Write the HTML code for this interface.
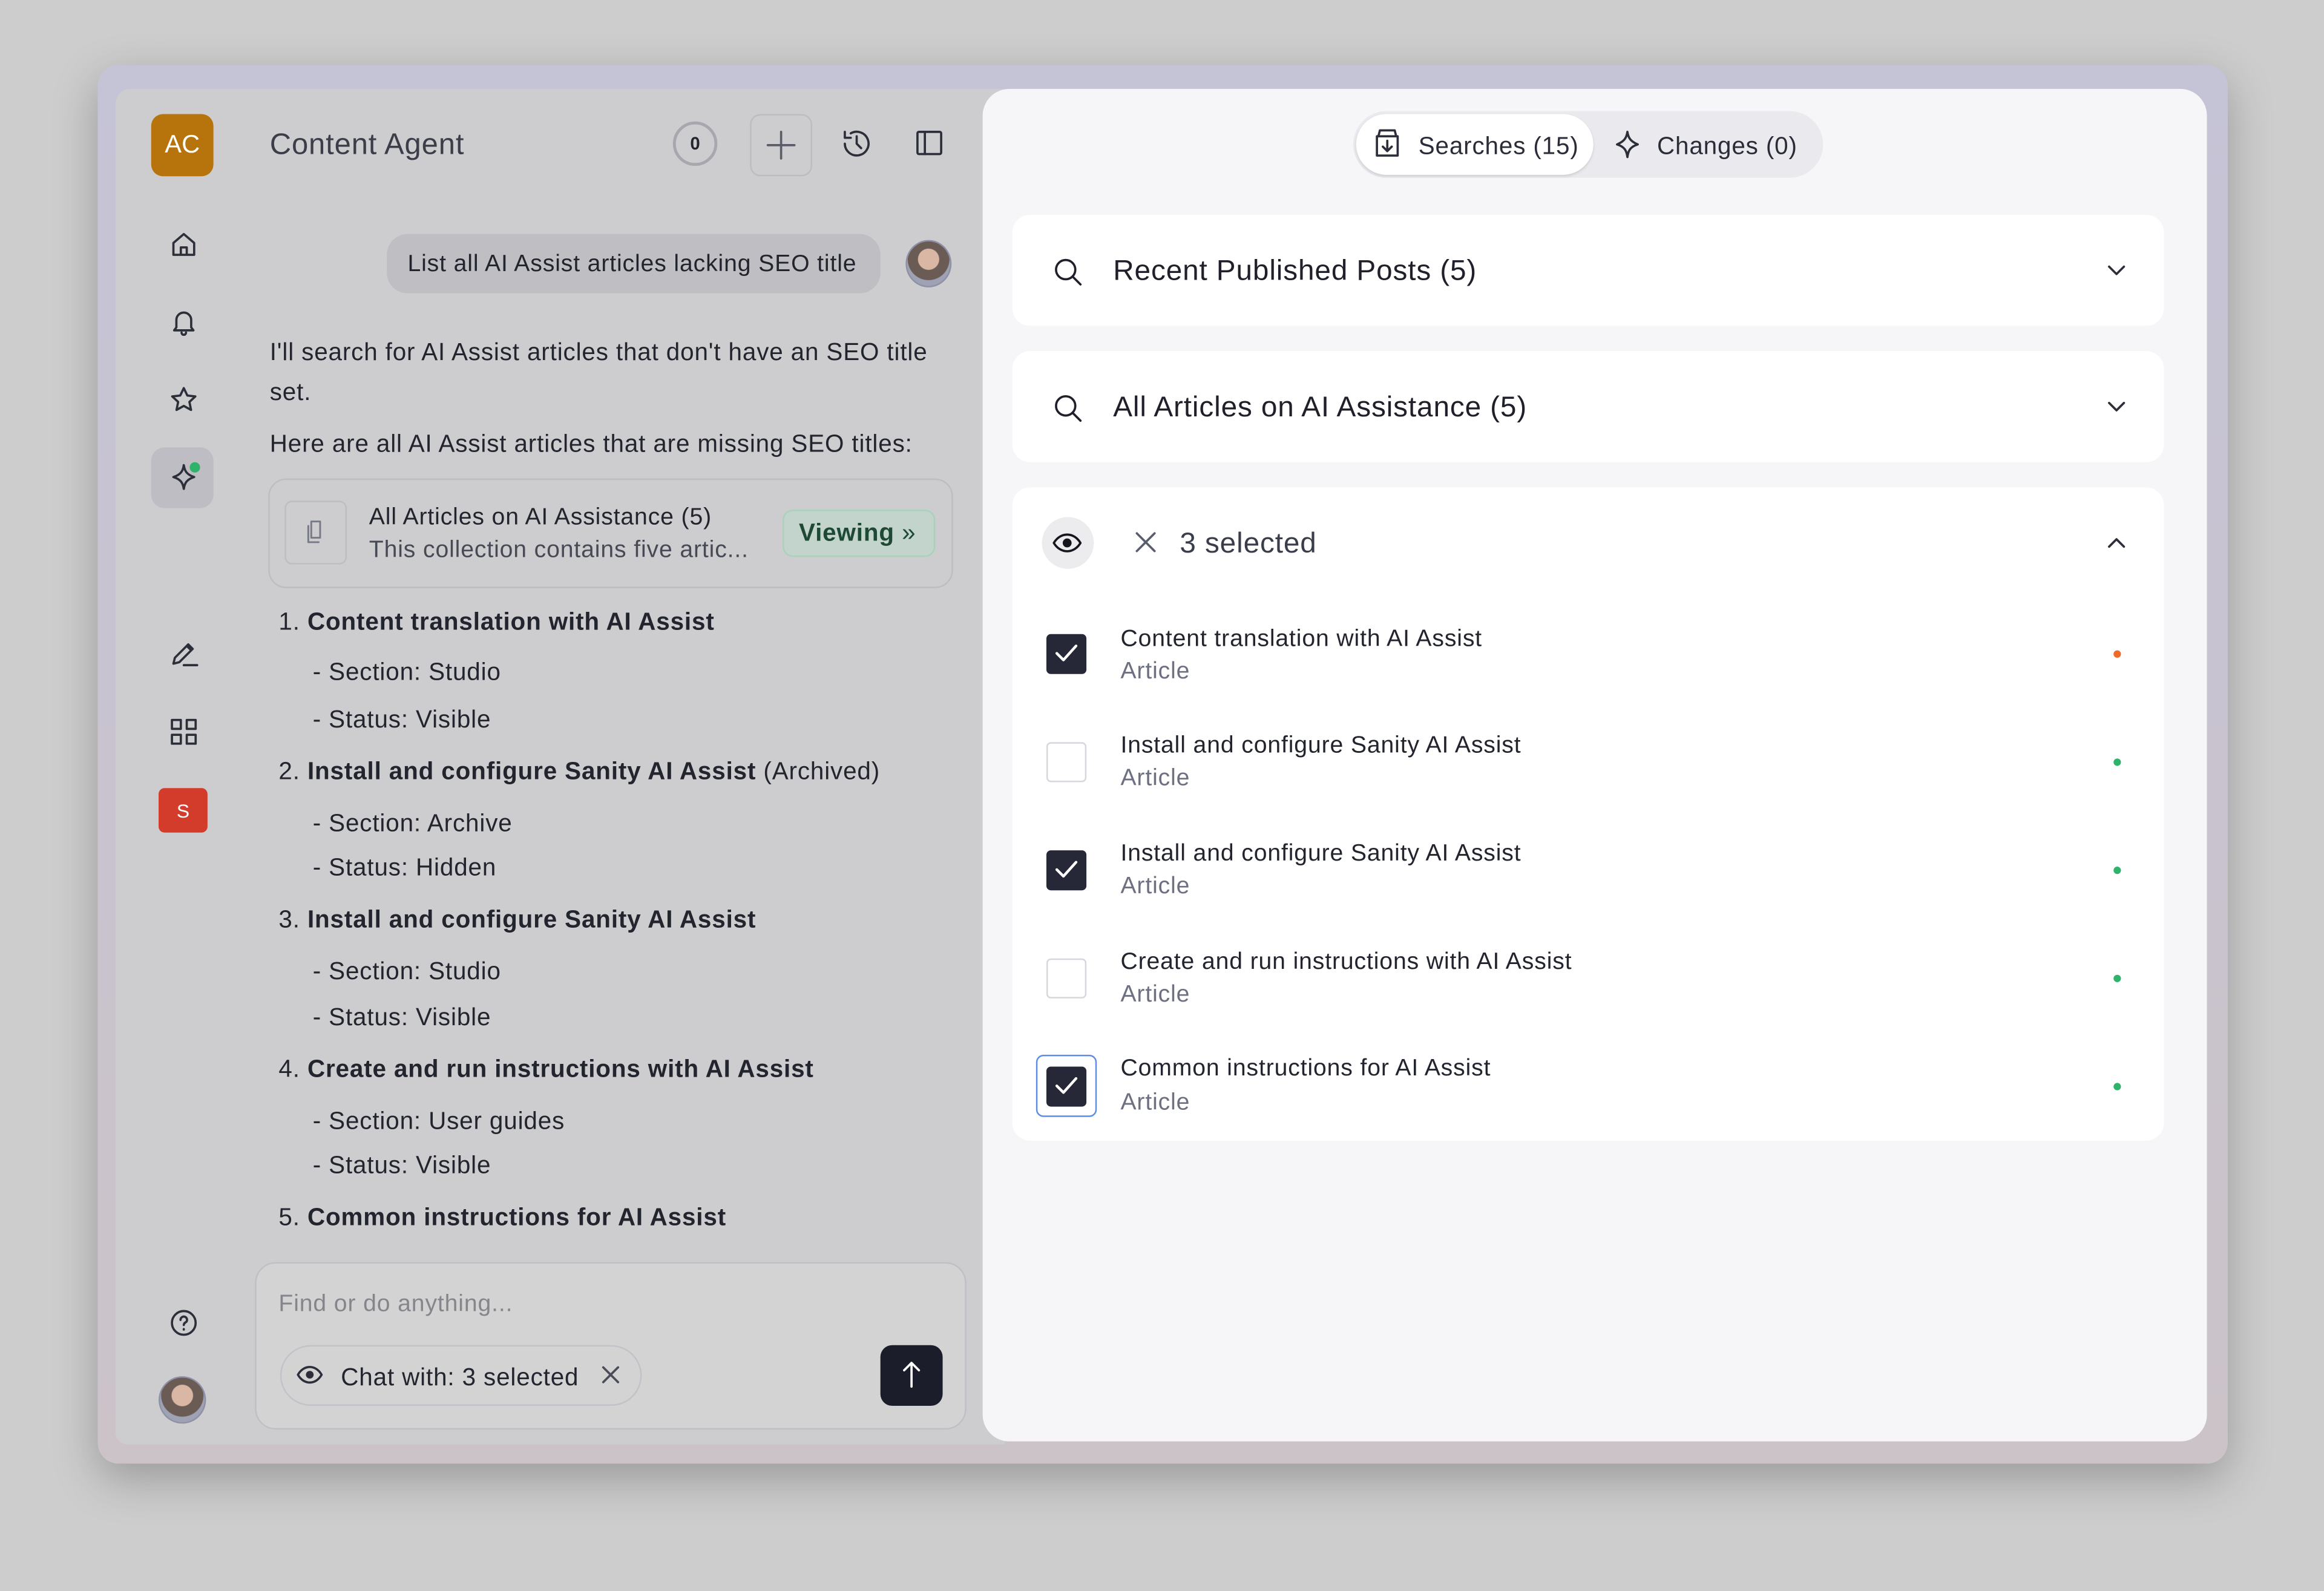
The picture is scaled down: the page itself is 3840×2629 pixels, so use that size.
<!DOCTYPE html>
<html><head><meta charset="utf-8"><style>
*{box-sizing:border-box;margin:0;padding:0}
html,body{width:3840px;height:2629px;overflow:hidden;background:#cdcdcd}
#s{position:absolute;left:0;top:0;width:1568px;height:1074px;transform:scale(2.449,2.4479);transform-origin:0 0;font-family:"Liberation Sans",sans-serif;color:#22242e}
.a{position:absolute}
.win{left:66px;top:44px;width:1437px;height:944px;border-radius:14px;background:linear-gradient(180deg,#c5c3d6,#cbc3c8);box-shadow:0 10px 30px rgba(0,0,0,.25)}
.left{left:78px;top:60px;width:600px;height:915px;background:#cdcdcf;border-radius:10px 0 0 8px}
.right{left:663px;top:60px;width:826px;height:913px;background:#f6f6f8;border-radius:18px}
.t{white-space:nowrap;line-height:1;letter-spacing:.35px;margin-top:1px}
svg{position:absolute;overflow:visible}
.ic{fill:none;stroke:#2c2f3a;stroke-width:1.5;stroke-linecap:round;stroke-linejoin:round}
.card{background:#fff;border-radius:12px;left:683px;width:777px}
.cb{width:27px;height:27px;border-radius:3px;left:706px}
.on{background:#262838}
.off{background:#fff;border:1.5px solid #d6d7dd}
.dot{width:5px;height:5px;border-radius:50%;left:1426px}
</style></head><body><div id="s">
<div class="a win"></div>
<div class="a left"></div>
<div class="a right"></div>

<div class="a" style="left:102px;top:77px;width:42px;height:42px;border-radius:8px;background:#b8740c;color:#fff;font-size:17px;display:flex;align-items:center;justify-content:center">AC</div>
<svg style="left:116px;top:157px" width="16" height="16"><path class="ic" d="M1 7L8 1L15 7V15H1Z M6 15V10H10V15"/></svg>
<svg style="left:116px;top:209px" width="16" height="17"><path class="ic" d="M3 12V7a5 5 0 0110 0v5l1.5 2h-13z M6.5 15.5a1.5 1.5 0 003 0"/></svg>
<svg style="left:115px;top:261px" width="18" height="17"><path class="ic" d="M9 1l2.4 5 5.4.6-4 3.7 1.1 5.4L9 13l-4.9 2.7 1.1-5.4-4-3.7 5.4-.6z"/></svg>
<div class="a" style="left:102px;top:302px;width:42px;height:41px;border-radius:9px;background:#bdbdc3"></div>
<svg style="left:115px;top:313px" width="18" height="18"><path class="ic" d="M9 1c.6 4 2 6.4 7 8-5 1.6-6.4 4-7 8-.6-4-2-6.4-7-8 5-1.6 6.4-4 7-8z"/></svg>
<div class="a" style="left:128px;top:312px;width:7px;height:7px;border-radius:50%;background:#2fb36b"></div>
<svg style="left:115px;top:432px" width="19" height="18"><path class="ic" d="M2 16l1-4 9-9 3 3-9 9z M11 4l3 3 M9 17h9"/></svg>
<svg style="left:115px;top:485px" width="18" height="18"><rect class="ic" x="1" y="1" width="6" height="6"/><rect class="ic" x="11" y="1" width="6" height="6"/><rect class="ic" x="1" y="11" width="6" height="6"/><rect class="ic" x="11" y="11" width="6" height="6"/></svg>
<div class="a" style="left:107px;top:532px;width:33px;height:30px;border-radius:4px;background:#d33c2b;color:#fff;font-size:13px;display:flex;align-items:center;justify-content:center">S</div>
<svg style="left:115px;top:884px" width="18" height="18"><circle class="ic" cx="9" cy="9" r="8"/><path class="ic" d="M6.8 7a2.2 2.2 0 114 1.2c-.8.6-1.8 1-1.8 2.2 M9 13.2v.3"/></svg>
<div class="a" style="left:107px;top:929px;width:32px;height:32px;border-radius:50%;background:radial-gradient(circle at 50% 40%,#d9b7a4 0 30%,#6b5b55 32% 60%,#9ea2b4 62%);border:1.5px solid #8e90a6"></div>

<div class="a t" style="left:182px;top:87px;font-size:20px;color:#3b3e49">Content Agent</div>
<div class="a" style="left:454px;top:82px;width:30px;height:30px;border-radius:50%;border:2px solid #a7a8ae;font-size:12px;font-weight:bold;display:flex;align-items:center;justify-content:center">0</div>
<div class="a" style="left:506px;top:77px;width:42px;height:42px;border-radius:7px;border:1px solid #bcbcc2"></div>
<svg style="left:517px;top:88px" width="20" height="20"><path class="ic" d="M10 1v18M1 10h18" style="stroke:#5a5d68"/></svg>
<svg style="left:567px;top:86px" width="22" height="22"><path class="ic" d="M3 11a8 8 0 104-7M3 3v4h4 M11 6v5l3 3"/></svg>
<svg style="left:618px;top:88px" width="18" height="17"><rect class="ic" x="1" y="1" width="16" height="15" rx="1"/><path class="ic" d="M6 1v15"/></svg>

<div class="a" style="left:261px;top:158px;width:333px;height:40px;border-radius:14px;background:#bebec3"></div>
<div class="a t" style="left:275px;top:170px;font-size:16px">List all AI Assist articles lacking SEO title</div>
<div class="a" style="left:611px;top:162px;width:31px;height:32px;border-radius:50%;background:radial-gradient(circle at 50% 40%,#d9b7a4 0 30%,#6b5b55 32% 60%,#9ea2b4 62%);border:1.5px solid #8e90a6"></div>
<div class="a t" style="left:182px;top:229px;font-size:16.5px">I'll search for AI Assist articles that don't have an SEO title</div>
<div class="a t" style="left:182px;top:256px;font-size:16.5px">set.</div>
<div class="a t" style="left:182px;top:291px;font-size:16.5px">Here are all AI Assist articles that are missing SEO titles:</div>
<div class="a" style="left:181px;top:323px;width:462px;height:74px;border-radius:12px;border:1px solid #bdbdc3"></div>
<div class="a" style="left:192px;top:338px;width:42px;height:43px;border-radius:5px;border:1px solid #bdbdc3"></div>
<svg style="left:207px;top:351px" width="12" height="16"><path class="ic" style="stroke:#777a85;stroke-width:1.2" d="M3 1h6v11H3z M1 4v11h7"/></svg>
<div class="a t" style="left:249px;top:341px;font-size:16px">All Articles on AI Assistance (5)</div>
<div class="a t" style="left:249px;top:363px;font-size:16px;color:#474a55">This collection contains five artic...</div>
<div class="a" style="left:528px;top:344px;width:103px;height:32px;border-radius:7px;background:#c2d4cb;border:1px solid #a8d2bc"></div>
<div class="a t" style="left:539px;top:351px;font-size:16.5px;color:#1e4a35;font-weight:bold">Viewing <span style="font-weight:normal">»</span></div>

<div class="a t" style="left:188px;top:411px;font-size:16.5px">1. <b>Content translation with AI Assist</b></div>
<div class="a t" style="left:211px;top:445px;font-size:16.5px">- Section: Studio</div>
<div class="a t" style="left:211px;top:477px;font-size:16.5px">- Status: Visible</div>
<div class="a t" style="left:188px;top:512px;font-size:16.5px">2. <b>Install and configure Sanity AI Assist</b> (Archived)</div>
<div class="a t" style="left:211px;top:547px;font-size:16.5px">- Section: Archive</div>
<div class="a t" style="left:211px;top:577px;font-size:16.5px">- Status: Hidden</div>
<div class="a t" style="left:188px;top:612px;font-size:16.5px">3. <b>Install and configure Sanity AI Assist</b></div>
<div class="a t" style="left:211px;top:647px;font-size:16.5px">- Section: Studio</div>
<div class="a t" style="left:211px;top:678px;font-size:16.5px">- Status: Visible</div>
<div class="a t" style="left:188px;top:713px;font-size:16.5px">4. <b>Create and run instructions with AI Assist</b></div>
<div class="a t" style="left:211px;top:748px;font-size:16.5px">- Section: User guides</div>
<div class="a t" style="left:211px;top:778px;font-size:16.5px">- Status: Visible</div>
<div class="a t" style="left:188px;top:813px;font-size:16.5px">5. <b>Common instructions for AI Assist</b></div>

<div class="a" style="left:172px;top:852px;width:480px;height:113px;border-radius:14px;background:#d3d3d4;border:1px solid #bfbfc5"></div>
<div class="a t" style="left:188px;top:872px;font-size:16px;color:#85868b">Find or do anything...</div>
<div class="a" style="left:189px;top:908px;width:244px;height:41px;border-radius:21px;border:1px solid #c2c2c8"></div>
<svg style="left:200px;top:922px" width="18" height="12"><path class="ic" d="M1 6c4-7 12-7 16 0-4 7-12 7-16 0z"/><circle cx="9" cy="6" r="2.6" fill="#2c2f3a"/></svg>
<div class="a t" style="left:230px;top:921px;font-size:16.5px">Chat with: 3 selected</div>
<svg style="left:406px;top:922px" width="12" height="12"><path class="ic" d="M1 1l10 10M11 1L1 11" style="stroke:#4a4d58"/></svg>
<div class="a" style="left:594px;top:908px;width:42px;height:41px;border-radius:8px;background:#1b1d2a"></div>
<svg style="left:609px;top:919px" width="12" height="18"><path class="ic" d="M6 17V1M1 6l5-5 5 5" style="stroke:#fff"/></svg>

<div class="a" style="left:913px;top:75px;width:317px;height:45px;border-radius:23px;background:#eaeaee"></div>
<div class="a" style="left:915px;top:77px;width:160px;height:41px;border-radius:21px;background:#fff;box-shadow:0 1px 2px rgba(0,0,0,.12)"></div>
<svg style="left:927px;top:87px" width="18" height="20"><path class="ic" d="M2 5h14v13H2z M3 5l1-4h10l1 4 M9 8v7M6 12l3 3 3-3"/></svg>
<div class="a t" style="left:957px;top:90px;font-size:16.5px;color:#2a2c38">Searches (15)</div>
<svg style="left:1089px;top:88px" width="18" height="19"><path class="ic" d="M9 1c.6 4 2 6.4 7 8.5-5 1.6-6.4 4-7 8.5-.6-4.5-2-6.9-7-8.5 5-2.1 6.4-4.5 7-8.5z"/></svg>
<div class="a t" style="left:1118px;top:90px;font-size:16.5px;color:#2a2c38">Changes (0)</div>

<div class="a card" style="top:145px;height:75px"></div>
<svg style="left:711px;top:174px" width="19" height="19"><circle class="ic" cx="8" cy="8" r="6.5" style="stroke:#1f2029"/><path class="ic" d="M13 13l5 5" style="stroke:#1f2029"/></svg>
<div class="a t" style="left:751px;top:173px;font-size:19.5px;color:#1f2029">Recent Published Posts (5)</div>
<svg style="left:1422px;top:179px" width="12" height="7"><path class="ic" d="M1 1l5 5 5-5"/></svg>

<div class="a card" style="top:237px;height:75px"></div>
<svg style="left:711px;top:266px" width="19" height="19"><circle class="ic" cx="8" cy="8" r="6.5" style="stroke:#1f2029"/><path class="ic" d="M13 13l5 5" style="stroke:#1f2029"/></svg>
<div class="a t" style="left:751px;top:265px;font-size:19.5px;color:#1f2029">All Articles on AI Assistance (5)</div>
<svg style="left:1422px;top:271px" width="12" height="7"><path class="ic" d="M1 1l5 5 5-5"/></svg>

<div class="a card" style="top:329px;height:441px"></div>
<div class="a" style="left:703px;top:349px;width:35px;height:35px;border-radius:50%;background:#ececef"></div>
<svg style="left:710px;top:360px" width="20" height="13"><path class="ic" d="M1 6.5c4.5-7.5 13.5-7.5 18 0-4.5 7.5-13.5 7.5-18 0z" style="stroke:#15161d"/><circle cx="10" cy="6.5" r="3" fill="#15161d"/></svg>
<svg style="left:766px;top:359px" width="14" height="14"><path class="ic" d="M1 1l12 12M13 1L1 13" style="stroke:#5a5d6b"/></svg>
<div class="a t" style="left:796px;top:357px;font-size:19.5px;color:#3a3d4a">3 selected</div>
<svg style="left:1422px;top:363px" width="12" height="7"><path class="ic" d="M1 6l5-5 5 5"/></svg>

<div class="a cb on" style="top:428px"></div>
<svg style="left:712px;top:435px" width="15" height="12"><path class="ic" d="M1 6l4.5 4.5L14 1" style="stroke:#fff;stroke-width:1.8"/></svg>
<div class="a t" style="left:756px;top:423px;font-size:16px">Content translation with AI Assist</div>
<div class="a t" style="left:756px;top:445px;font-size:16px;color:#6d7080">Article</div>
<div class="a dot" style="top:439px;background:#f06b2a"></div>

<div class="a cb off" style="top:501px"></div>
<div class="a t" style="left:756px;top:495px;font-size:16px">Install and configure Sanity AI Assist</div>
<div class="a t" style="left:756px;top:517px;font-size:16px;color:#6d7080">Article</div>
<div class="a dot" style="top:512px;background:#2fb36b"></div>

<div class="a cb on" style="top:574px"></div>
<svg style="left:712px;top:581px" width="15" height="12"><path class="ic" d="M1 6l4.5 4.5L14 1" style="stroke:#fff;stroke-width:1.8"/></svg>
<div class="a t" style="left:756px;top:568px;font-size:16px">Install and configure Sanity AI Assist</div>
<div class="a t" style="left:756px;top:590px;font-size:16px;color:#6d7080">Article</div>
<div class="a dot" style="top:585px;background:#2fb36b"></div>

<div class="a cb off" style="top:647px"></div>
<div class="a t" style="left:756px;top:641px;font-size:16px">Create and run instructions with AI Assist</div>
<div class="a t" style="left:756px;top:663px;font-size:16px;color:#6d7080">Article</div>
<div class="a dot" style="top:658px;background:#2fb36b"></div>

<div class="a" style="left:699px;top:712px;width:41px;height:42px;border-radius:5px;border:1.5px solid #5b8ce6"></div>
<div class="a cb on" style="top:720px"></div>
<svg style="left:712px;top:727px" width="15" height="12"><path class="ic" d="M1 6l4.5 4.5L14 1" style="stroke:#fff;stroke-width:1.8"/></svg>
<div class="a t" style="left:756px;top:713px;font-size:16px">Common instructions for AI Assist</div>
<div class="a t" style="left:756px;top:736px;font-size:16px;color:#6d7080">Article</div>
<div class="a dot" style="top:731px;background:#2fb36b"></div>
</div></body></html>
